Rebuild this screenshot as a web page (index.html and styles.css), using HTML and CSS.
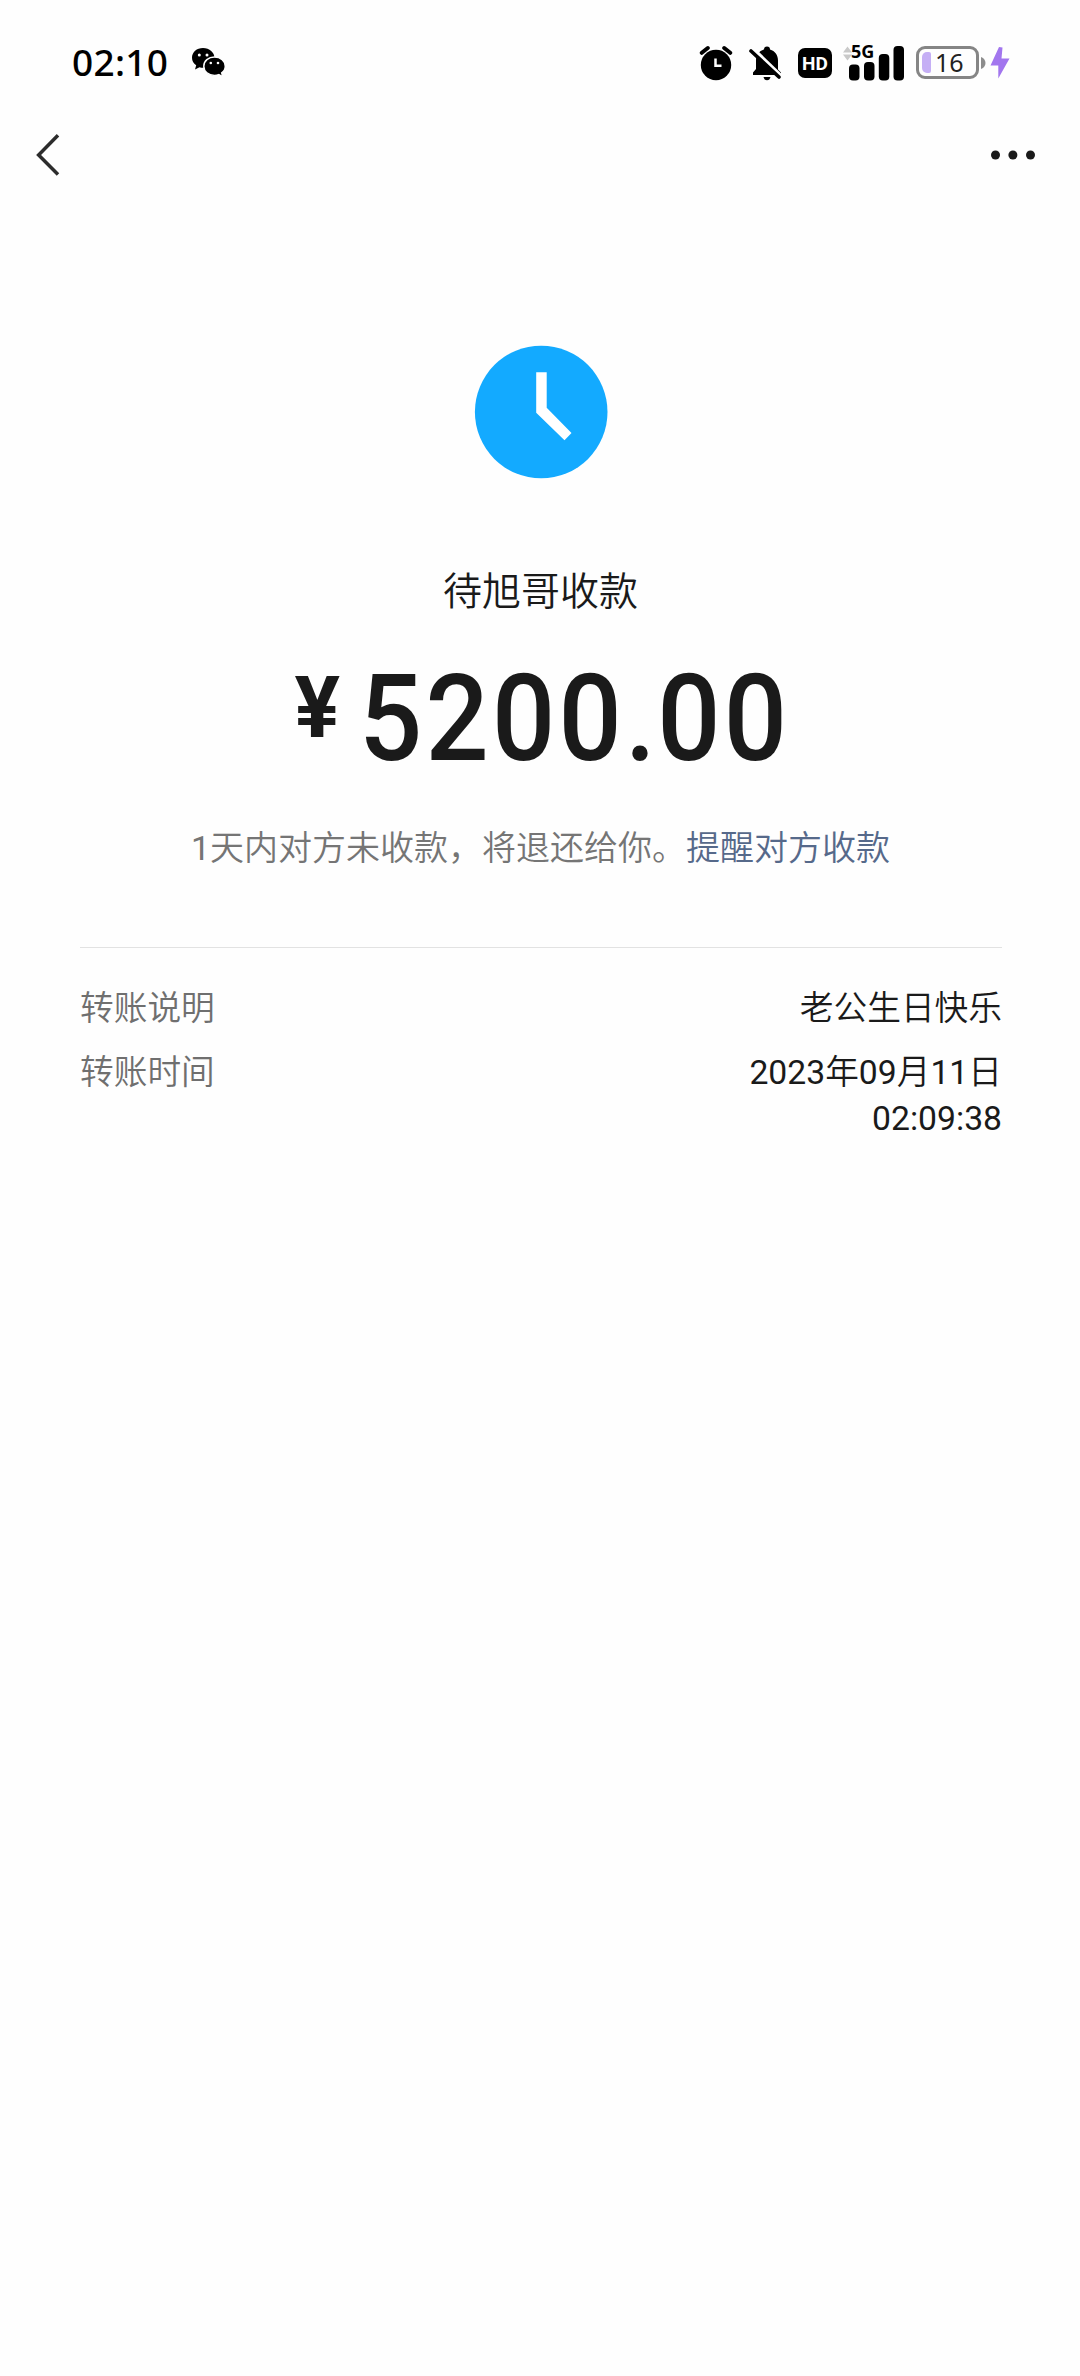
FILE: index.html
```html
<!DOCTYPE html>
<html lang="zh-CN">
<head>
<meta charset="utf-8">
<title>转账详情</title>
<link rel="stylesheet" href="styles.css">
</head>
<body>
<header class="status">
  <span class="time">02:10</span>
  <svg class="wechat" width="36" height="32" viewBox="0 0 36 32">
    <path d="M12 1C5.700 1 1 5.200 1 10.800c0 3.200 1.500 5.700 4.200 7.500L4 22.500l4.500-2.300c1.200.4 2.300.5 3.500.5C18.500 20.700 23.500 16.500 23.500 11S18.500 1 12 1z"/>
    <path d="M23.500 10C17.400 10 12.800 14 12.800 19.200s4.600 9.200 10.700 9.200c1.600 0 3-.3 4.300-.8l4 2.200-1.100-3.900c2.300-1.600 3.600-4 3.600-6.700C34.300 14 29.600 10 23.500 10z" stroke="#fefefe" stroke-width="1.500"/>
    <g fill="#fefefe"><circle cx="8.300" cy="8" r="1.500"/><circle cx="16" cy="8" r="1.500"/><circle cx="19.800" cy="16" r="1.300"/><circle cx="27" cy="16" r="1.300"/></g>
  </svg>
  <div class="indicators">
    <svg class="alarm" width="34" height="36" viewBox="698 44 34 36">
      <circle cx="715" cy="64" r="15.200"/>
      <path d="M700.800 51.800l6-4.800M729.200 51.800l-6-4.800" stroke="#000" stroke-width="4" stroke-linecap="round"/>
      <path d="M714.500 57.500v7.300h6" fill="none" stroke="#fefefe" stroke-width="2.500"/>
    </svg>
    <svg class="bell" width="34" height="36" viewBox="747 44 34 36">
      <path d="M766 45.500c2 0 3 1.200 3 3 5 1.500 8 5.500 8 11v9l3 3v2.500h-28V71.500l3-3.500v-8.500c0-5.500 3-9.500 8-11 0-1.800 1-3 3-3z"/>
      <path d="M762.500 76h7c-.5 2-1.500 3.300-3.500 3.300s-3-1.300-3.500-3.300z"/>
      <path d="M752 48l31 30" stroke="#fefefe" stroke-width="4"/>
      <path d="M750 50l28 26" stroke="#000" stroke-width="3.600" stroke-linecap="round"/>
    </svg>
    <span class="hd">HD</span>
    <div class="signal">
      <svg width="62" height="36" viewBox="842 44 62 36">
        <path d="M842 51.500l4.500-6 4.500 6zM842 53.500h9l-4.500 6z" fill="#c9c9c9"/>
        <rect x="848" y="63.500" width="10.500" height="16" rx="4"/>
        <rect x="863" y="61" width="10.500" height="18.500" rx="4"/>
        <rect x="877.800" y="53" width="10.500" height="26.500" rx="4"/>
        <rect x="892.500" y="45" width="10.500" height="34.500" rx="4"/>
      </svg>
      <span class="net">5G</span>
    </div>
    <div class="battery"><i class="level"></i><span>16</span></div>
    <svg class="tip" width="5" height="12" viewBox="0 0 5 12"><path d="M0 0c3 1 4.500 3.500 4.500 6S3 11 0 12z" fill="#8d8d8d"/></svg>
    <svg class="bolt" width="20" height="32" viewBox="0 0 20 32"><path d="M9 0L.5 18.500h7.800V31.500L19.500 11.500h-8L12.500.5z" fill="#a276ee"/></svg>
  </div>
</header>
<nav class="nav">
  <svg width="26" height="44" viewBox="36 133 26 44"><path d="M58 135.300L38.600 155 58 174.600" fill="none" stroke="#2c2c2c" stroke-width="3.500"/></svg>
  <svg width="46" height="12" viewBox="0 0 46 12" fill="#1a1a1a"><circle cx="5.500" cy="6" r="4.500"/><circle cx="22.900" cy="6" r="4.500"/><circle cx="40.500" cy="6" r="4.500"/></svg>
</nav>
<main class="content">
  <svg class="clock" width="134" height="134" viewBox="473.500 344.500 134 134">
    <circle cx="540.700" cy="411.500" r="66.300" fill="#13aaff"/>
    <path d="M535.700 371.700h10.500v35.600l24.800 25.200-7 7.200-28.300-27.500z" fill="#fff"/>
  </svg>
  <h1 class="payee">待旭哥收款</h1>
  <div class="amount"><span class="yen">¥</span><span class="value">5200<span class="dot">.</span>00</span></div>
  <p class="hint"><span class="num">1</span>天内对方未收款，将退还给你。<a class="remind">提醒对方收款</a></p>
  <dl class="details">
    <div class="row"><dt>转账说明</dt><dd>老公生日快乐</dd></div>
    <div class="row"><dt>转账时间</dt><dd><span class="num">2023</span>年<span class="num">09</span>月<span class="num">11</span>日<br><span class="num">02:09:38</span></dd></div>
  </dl>
</main>
</body>
</html>
```
FILE: styles.css
```css
* { box-sizing: border-box; margin: 0; padding: 0; }
body {
  width: 1080px;
  min-height: 2376px;
  background: #fefefe;
  color: #1a1a1a;
  font-family: Roboto, "Noto Sans CJK SC", sans-serif;
}
svg { display: block; flex: none; }
.status {
  display: flex;
  align-items: center;
  height: 125px;
  padding-left: 72px;
  padding-right: 70px;
  color: #000;
}
.time {
  width: 119px;
  padding-bottom: 1px;
  font: 480 37px/44px "Noto Sans", sans-serif;
  letter-spacing: 0.3px;
}
.indicators {
  display: flex;
  align-items: center;
  margin-left: auto;
}
.bell { margin-left: 15px; }
.hd {
  width: 34px;
  height: 30px;
  margin-left: 16px;
  border-radius: 7px;
  background: #000;
  color: #fefefe;
  font: 700 19px/31px Roboto, sans-serif;
  text-align: center;
}
.signal { position: relative; margin-left: 11px; }
.net {
  position: absolute;
  left: 8px;
  top: -3px;
  font: 700 18px/18px "Noto Sans", sans-serif;
}
.battery {
  display: flex;
  align-items: center;
  width: 63px;
  height: 33px;
  margin-left: 11px;
  padding-left: 3px;
  border: 3px solid #858585;
  border-radius: 9px;
  color: #222;
  font: 400 25px/27px "Noto Sans", sans-serif;
}
.battery span { margin: 0 0 1px 4px; }
.level {
  width: 9px;
  height: 21px;
  border-radius: 5px 2px 2px 5px;
  background: #c5aff5;
}
.tip { margin-left: 2px; }
.bolt { margin-left: 4px; }
.nav {
  display: flex;
  justify-content: space-between;
  align-items: center;
  height: 60px;
  padding: 0 44px 0 36px;
}
.content {
  display: flex;
  flex-direction: column;
  align-items: center;
  padding: 160px 79px 0 80px;
}
.payee {
  margin-top: 83px;
  font-size: 39px;
  line-height: 60px;
  font-weight: 350;
}
.amount {
  display: flex;
  align-items: flex-start;
  width: 492px;
  height: 120px;
  margin-top: 37px;
}
.yen {
  flex: none;
  width: 64px;
  font: 700 85px/98px Roboto, sans-serif;
}
.value {
  flex: none;
  width: 423px;
  font: 500 121px/120px Roboto, sans-serif;
  letter-spacing: 3.500px;
  white-space: nowrap;
  transform: scaleX(0.92);
  transform-origin: left;
}
.dot { letter-spacing: 1.500px; }
.hint {
  margin-top: 44px;
  font-size: 34px;
  line-height: 50px;
  font-weight: 350;
  color: #757575;
  white-space: nowrap;
}
.num { font-weight: 400; }
.remind { color: #56698a; }
.details {
  width: 922px;
  margin: 74px -1px 0 0;
  padding-top: 38px;
  border-top: 1px solid #e2e2e2;
  font-size: 33.700px;
  line-height: 46px;
  font-weight: 350;
}
.row {
  display: flex;
  justify-content: space-between;
  margin-bottom: 18px;
}
.row dt { color: #6f6f6f; }
.row dd { text-align: right; }
```
